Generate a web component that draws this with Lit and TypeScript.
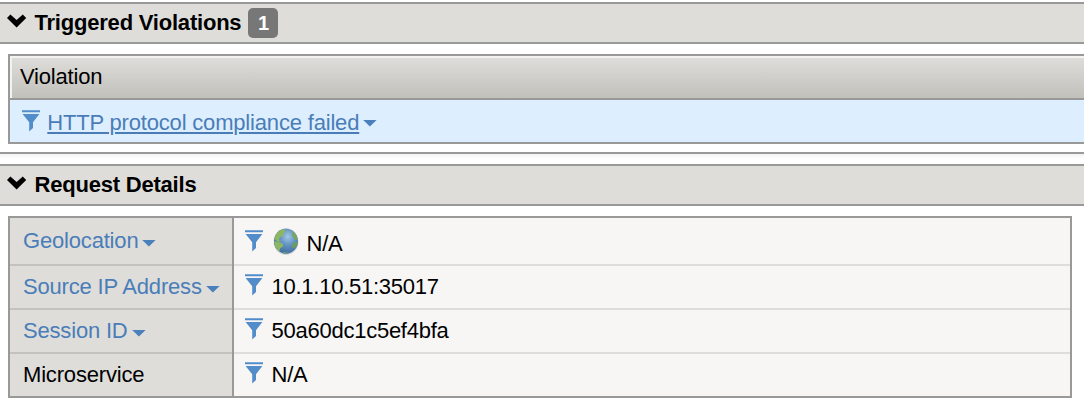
import { LitElement, html, css, nothing } from "lit";
import { customElement, property } from "lit/decorators.js";

const chevron = html`<svg class="chevron" width="20" height="14" viewBox="0 0 20 14">
  <path d="M0 4 L3.4 0.6 L9.6 5.9 L15.8 0.6 L19.2 4 L9.6 13.6 Z" fill="#000" /></svg>`;

const caret = html`<svg class="caret" width="14" height="7" viewBox="0 0 14 7">
  <path d="M0.2 0 H13.6 L6.9 6.6 Z" fill="#4a80bb" /></svg>`;

const funnel = html`<svg class="funnel" width="18" height="22" viewBox="0 0 18 22">
  <path d="M0 0.3 H18 V2.3 H0 Z M0.6 4 H17.4 L11 12.2 V18 L7.2 21.6 V12.2 Z" fill="#528dca" /></svg>`;

const globe = html`<svg class="globe" width="26" height="28" viewBox="0 0 26 28">
  <defs>
    <radialGradient id="sea" cx="0.58" cy="0.32" r="0.72">
      <stop offset="0" stop-color="#a3c6e4" />
      <stop offset="0.45" stop-color="#6394c4" />
      <stop offset="1" stop-color="#3d6898" />
    </radialGradient>
    <clipPath id="disc"><ellipse cx="13" cy="13.2" rx="12" ry="12.6" /></clipPath>
    <filter id="soft"><feGaussianBlur stdDeviation="0.6" /></filter>
  </defs>
  <ellipse cx="13" cy="14" rx="12.4" ry="13" fill="#c4ccd2" opacity="0.7" filter="url(#soft)" />
  <ellipse cx="13" cy="13.2" rx="12" ry="12.6" fill="url(#sea)" filter="url(#soft)" />
  <g clip-path="url(#disc)"><g filter="url(#soft)" fill="#8db663">
    <path d="M4 4 L10 0.8 L13 3 L10 6 L10.5 8 L7 9 L6 12 L8 13 L5 14 L1 11 Z" />
    <path d="M1 13 L5 14 L9 15 L10.5 18 L7.5 20 L6 24 L2 20 Z" />
    <path d="M18 2 L23 6 L25 12 L22 12 L20.5 9 L18.5 8 L19.5 5 Z" fill="#78a566" />
    <path d="M19 16 L23 13.5 L25 15 L22 20 L19.5 20 Z" fill="#6b9c62" />
    <path d="M10 24 L16 24.5 L14 26.5 L9 26 Z" fill="#6a9c7c" />
  </g></g></svg>`;

@customElement("section-header")
class SectionHeader extends LitElement {
  @property() heading = "";
  @property() count = "";
  static styles = css`
    :host { display: block; }
    .bar {
      box-sizing: border-box; height: 42px; display: flex; align-items: flex-start;
      border-top: 2px solid #999; border-bottom: 2px solid #999;
      background: #dedddA; padding: 0 0 0 7px;
      font-weight: bold; font-size: 22px; line-height: 26px; color: #000;
    }
    .chevron { margin: 10px 7.5px 0 0; flex: none; }
    .title { margin-top: 6px; white-space: nowrap; letter-spacing: -0.21px; }
    .badge {
      box-sizing: border-box; margin: 4px 0 0 7px; width: 30px; height: 30px;
      border-radius: 5px; background: #777; color: #fff;
      text-align: center; font-size: 20px; line-height: 30px;
    }
  `;
  render() {
    return html`<div class="bar">${chevron}<span class="title">${this.heading}</span>${
      this.count ? html`<span class="badge">${this.count}</span>` : nothing}</div>`;
  }
}

const details = [
  { label: "Geolocation", value: "N/A", menu: true, globe: true },
  { label: "Source IP Address", value: "10.1.10.51:35017", menu: true, globe: false },
  { label: "Session ID", value: "50a60dc1c5ef4bfa", menu: true, globe: false },
  { label: "Microservice", value: "N/A", menu: false, globe: false },
];

@customElement("app-root")
class AppRoot extends LitElement {
  static styles = css`
    :host {
      display: block; height: 404px; overflow: hidden; background: #fff;
      font-family: "Liberation Sans", Arial, sans-serif;
      font-size: 22px; line-height: 26px; color: #000; padding-top: 2px;
      box-sizing: border-box; letter-spacing: -0.18px;
    }
    svg { flex: none; }
    .violations {
      margin: 10px 0 0 8px; height: 90px; box-sizing: border-box;
      border: 2px solid #999; border-right: 0;
    }
    .column {
      box-sizing: border-box; height: 44px; padding: 8px 0 0 8px;
      border-bottom: 2px solid #999;
      background: linear-gradient(#dfdedb, #c2c0bb);
      box-shadow: inset 2px 2px #f3f3f1; padding-left: 10px;
    }
    .violation {
      display: flex; align-items: flex-start; height: 42px;
      background: #ddeffe; padding-left: 11.7px;
    }
    .violation .funnel { margin-top: 10.4px; }
    .link {
      margin: 10px 0 0 7.6px; color: #4a7db8; text-decoration: underline;
      text-decoration-thickness: 2px; text-underline-offset: 2px;
    }
    .violation .caret { margin: 20px 0 0 4px; }
    .divider {
      height: 10px; margin-top: 8px; border-top: 2px solid #999;
      background: linear-gradient(#f3f3f3, #fff 5px);
    }
    .details {
      margin: 10px 12px 0 8px; border: 2px solid #999;
      display: grid; grid-template-columns: 224px 1fr;
    }
    .label, .value {
      box-sizing: border-box; height: 44px; display: flex; align-items: flex-start;
      white-space: nowrap; border-bottom: 2px solid #dddddb;
    }
    .label {
      background: #dedddA; padding: 8px 0 0 13px;
      border-right: 2px solid #999; border-bottom: 0;
      box-shadow: inset 0 -2px #c3c2bf;
    }
    .value { background: #f7f6f4; padding-left: 11px; letter-spacing: -0.25px; }
    .tall { height: 48px; }
    .label.tall { padding-top: 10px; }
    .label.last, .value.last { height: 42px; border-bottom: 0; box-shadow: none; }
    .menu { color: #4a7db8; }
    .label .caret { margin: 12px 0 0 4px; }
    .value .funnel { margin-top: 8px; }
    .value .text { margin: 8px 0 0 8.5px; }
    .value.tall .funnel { margin-top: 12px; }
    .value.tall .text { margin: 13px 0 0 7.5px; }
    .globe { margin: 10px 0 0 10px; }
  `;
  render() {
    return html`
      <section-header heading="Triggered Violations" count="1"></section-header>
      <div class="violations">
        <div class="column">Violation</div>
        <div class="violation">${funnel}<span class="link">HTTP protocol compliance failed</span>${caret}</div>
      </div>
      <div class="divider"></div>
      <section-header heading="Request Details"></section-header>
      <div class="details">
        ${details.map((d, i) => {
          const size = d.globe ? "tall" : i === details.length - 1 ? "last" : "";
          return html`
            <div class="label ${size}"><span class=${d.menu ? "menu" : ""}>${d.label}</span>${d.menu ? caret : nothing}</div>
            <div class="value ${size}">${funnel}${d.globe ? globe : nothing}<span class="text">${d.value}</span></div>`;
        })}
      </div>`;
  }
}
